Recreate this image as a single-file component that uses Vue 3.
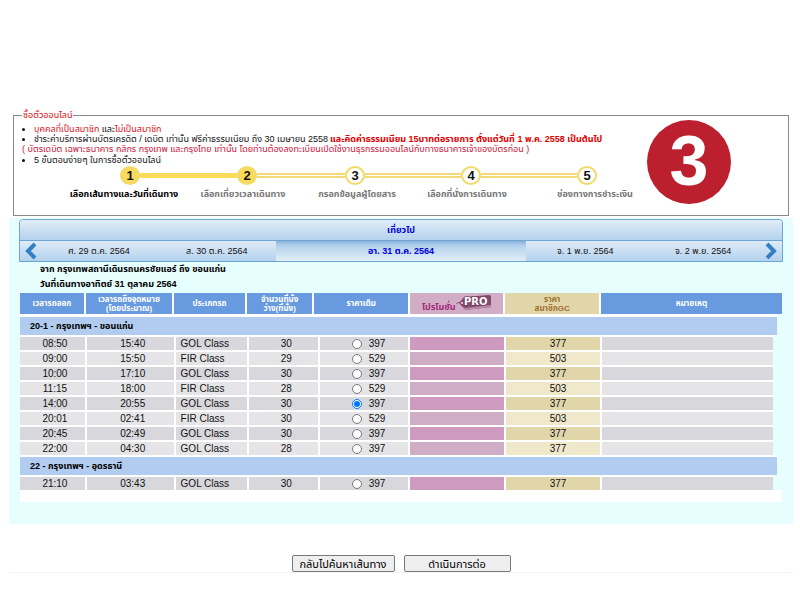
<script setup>
import { ref } from 'vue'

const steps = [
  { label: 'เลือกเส้นทางและวันที่เดินทาง', state: 'current' },
  { label: 'เลือกเที่ยวเวลาเดินทาง', state: 'next' },
  { label: 'กรอกข้อมูลผู้โดยสาร', state: '' },
  { label: 'เลือกที่นั่งการเดินทาง', state: '' },
  { label: 'ช่องทางการชำระเงิน', state: '' },
]

const days = ['ศ. 29 ต.ค. 2564', 'ส. 30 ต.ค. 2564', 'อา. 31 ต.ค. 2564', 'จ. 1 พ.ย. 2564', 'จ. 2 พ.ย. 2564']
const activeDay = ref(2)

const groups = [
  {
    name: '20-1 - กรุงเทพฯ - ขอนแก่น',
    trips: [
      ['08:50', '15:40', 'GOL Class', 30, 397, 377],
      ['09:00', '15:50', 'FIR Class', 29, 529, 503],
      ['10:00', '17:10', 'GOL Class', 30, 397, 377],
      ['11:15', '18:00', 'FIR Class', 28, 529, 503],
      ['14:00', '20:55', 'GOL Class', 30, 397, 377],
      ['20:01', '02:41', 'FIR Class', 30, 529, 503],
      ['20:45', '02:49', 'GOL Class', 30, 397, 377],
      ['22:00', '04:30', 'GOL Class', 28, 397, 377],
    ],
  },
  {
    name: '22 - กรุงเทพฯ - อุดรธานี',
    trips: [['21:10', '03:43', 'GOL Class', 30, 397, 377]],
  },
]
const selected = ref('14:00')
</script>

<template>
  <main class="page">
    <fieldset class="intro">
      <legend>ซื้อตั๋วออนไลน์</legend>
      <ul class="notes">
        <li><span class="red">บุคคลที่เป็นสมาชิก</span> และ<span class="red">ไม่เป็นสมาชิก</span></li>
        <li><span>ชำระค่าบริการผ่านบัตรเครดิต / เดบิต เท่านั้น ฟรีค่าธรรมเนียม ถึง 30 เมษายน 2558</span><b>และคิดค่าธรรมเนียม 15บาทต่อรายการ ตั้งแต่วันที่ 1 พ.ค. 2558 เป็นต้นไป</b></li>
      </ul>
      <p class="remark">( บัตรเดบิต เฉพาะธนาคาร กสิกร กรุงเทพ และกรุงไทย เท่านั้น โดยท่านต้องลงทะเบียนเปิดใช้งานธุรกรรมออนไลน์กับทางธนาคารเจ้าของบัตรก่อน )</p>
      <ul class="notes">
        <li>5 ขั้นตอนง่ายๆ ในการซื้อตั๋วออนไลน์</li>
      </ul>
      <div class="steps">
        <span v-for="(s, i) in steps" :key="i" class="track" :class="s.state"><span class="num">{{ i + 1 }}</span></span>
      </div>
      <div class="steps labels">
        <span v-for="s in steps" :key="s.label" :class="s.state">{{ s.label }}</span>
      </div>
      <span class="badge">3</span>
    </fieldset>

    <section class="results">
      <div class="picker">
        <h2>เที่ยวไป</h2>
        <nav class="days">
          <button class="arrow" aria-label="ก่อนหน้า">
            <svg viewBox="0 0 14 18" width="14" height="18"><path d="M12 2 5 9 12 16" /></svg>
          </button>
          <button v-for="(d, i) in days" :key="d" class="day" :class="{ active: i === activeDay }" @click="activeDay = i">{{ d }}</button>
          <button class="arrow" aria-label="ถัดไป">
            <svg viewBox="0 0 14 18" width="14" height="18"><path d="M2 2 9 9 2 16" /></svg>
          </button>
        </nav>
      </div>

      <div class="route">
        <p>จาก กรุงเทพสถานีเดินรถนครชัยแอร์ ถึง ขอนแก่น</p>
        <p>วันที่เดินทางอาทิตย์ 31 ตุลาคม 2564</p>
      </div>

      <table class="trips">
        <thead>
          <tr>
            <th>เวลารถออก</th>
            <th>เวลารถถึงจุดหมาย<br />(โดยประมาณ)</th>
            <th>ประเภทรถ</th>
            <th>จำนวนที่นั่ง<br />ว่าง(ที่นั่ง)</th>
            <th>ราคาเต็ม</th>
            <th class="promo">
              <span>โปรโมชั่น</span>
              <svg viewBox="0 0 36 17" width="36" height="17">
                <path class="string" d="M0 9Q3 6 5 8" />
                <path class="tag" d="M3 8 8 2 33 0Q35 0 35 2V12L9 15Z" />
                <path class="shade" d="M6 11 9 13 35 10V12L9 15Z" />
                <circle class="hole" cx="6" cy="8" r="1" />
                <text x="8" y="10">PRO</text>
              </svg>
            </th>
            <th class="member">ราคา<br />สมาชิกGC</th>
            <th>หมายเหตุ</th>
          </tr>
        </thead>
        <tbody v-for="g in groups" :key="g.name">
          <tr class="group"><th colspan="8">{{ g.name }}</th></tr>
          <tr v-for="t in g.trips" :key="t[0]" class="trip">
            <td>{{ t[0] }}</td>
            <td>{{ t[1] }}</td>
            <td class="type">{{ t[2] }}</td>
            <td>{{ t[3] }}</td>
            <td>
              <label><input v-model="selected" type="radio" name="trip" :value="t[0]" />{{ t[4] }}</label>
            </td>
            <td class="promo"></td>
            <td class="member">{{ t[5] }}</td>
            <td></td>
          </tr>
        </tbody>
      </table>
    </section>

    <footer class="actions">
      <button>กลับไปค้นหาเส้นทาง</button>
      <button class="proceed">ดำเนินการต่อ</button>
    </footer>
  </main>
</template>

<style>
body {
  margin: 0;
  background: #fff;
}
</style>

<style scoped>
.page {
  padding: 109px 7px 0 9px;
  font: 9px/10px "Liberation Sans", "Noto Sans Thai", sans-serif;
  color: #111;
}
p,
h2,
ul {
  margin: 0;
  padding: 0;
}
button {
  font: inherit;
  color: inherit;
  cursor: pointer;
}
.intro {
  position: relative;
  box-sizing: border-box;
  height: 107px;
  margin: 0 4px;
  padding: 3px 8px 0;
  border: 1px solid #888;
}
legend {
  padding: 0 1px;
  line-height: 12px;
  color: #d8141c;
}
.notes li {
  display: flex;
  align-items: center;
  height: 10px;
  list-style: none;
  white-space: pre;
}
.notes li::before {
  content: "";
  width: 3px;
  height: 3px;
  margin-right: 9px;
  border-radius: 50%;
  background: #111;
}
.red {
  color: #d8141c;
}
.notes b {
  margin-left: 2px;
  color: #e00000;
}
.remark {
  margin-bottom: 1px;
  color: #c8143c;
  white-space: nowrap;
}
.steps {
  display: grid;
  grid-template-columns: 120px 114px 102px 130px 102px;
  margin: 1px 0 0 48px;
  font-weight: bold;
  text-align: center;
}
.labels {
  grid-template-columns: 120px 118px 110px 110px 146px;
  margin: 4px 0 0 42px;
  color: #777;
  white-space: nowrap;
}
.labels .current {
  color: #000;
}
.track {
  display: grid;
  grid-template-columns: 1fr 20px 1fr;
  align-items: center;
}
.track::before,
.track::after {
  content: "";
  height: 1px;
  border: solid #f2da78;
  border-width: 2px 0;
}
.track:first-child::before,
.track:last-child::after {
  visibility: hidden;
}
.track.current::after,
.track.next::before {
  background: #f9dc5c;
  border-color: #f9dc5c;
}
.num {
  grid-column: 2;
  box-sizing: border-box;
  height: 19px;
  border: 2px solid #f2da68;
  border-radius: 50%;
  font-size: 13px;
  line-height: 15px;
  color: #111;
  background: #fff;
}
.current .num,
.next .num {
  background: #f9dc5c;
}
.badge {
  position: absolute;
  top: -1px;
  right: 57px;
  width: 84px;
  height: 84px;
  border-radius: 50%;
  background: #bc1f2d;
  color: #fff;
  font-size: 70px;
  font-weight: bold;
  line-height: 82px;
  text-align: center;
}
.results {
  margin-top: 2px;
  padding: 1px 10px 22px;
  background: #e6fefe;
}
.picker {
  border: 1px solid #6fa5d3;
  border-radius: 4px 4px 0 0;
  overflow: hidden;
  background: #c4dcf1;
}
h2 {
  font-size: 9px;
  line-height: 20px;
  text-align: center;
  color: #0000e0;
  background: linear-gradient(#e2edf8, #b4d2ee);
  border-bottom: 1px solid #6fa5d3;
}
.days {
  display: grid;
  grid-template-columns: 20fr 118fr 118fr 251fr 118fr 118fr 20fr;
  height: 20px;
  background: linear-gradient(#dfebf7, #b4d2ee);
}
.days button {
  padding: 0;
  border: 0;
  background: none;
  line-height: 20px;
  white-space: nowrap;
}
.arrow svg {
  display: block;
  margin: auto;
  fill: none;
  stroke: #3580c4;
  stroke-width: 4;
}
.days .active {
  font-weight: bold;
  color: #0000e0;
  background: linear-gradient(#88b4dc, #b4d2ec 25%, #e2eef8);
}
.route {
  padding: 0 21px;
  font-weight: bold;
  line-height: 15px;
  color: #000;
}
.trips {
  display: block;
  padding: 1px 1px 0;
}
.trips::after {
  content: "";
  display: block;
  height: 12px;
  background: #fff;
}
thead,
tbody {
  display: block;
}
tr {
  display: grid;
  column-gap: 2px;
  background: #fff;
}
thead tr {
  grid-template-columns: 64fr 87fr 71fr 66fr 94fr 94fr 94fr 182fr;
}
thead th {
  display: flex;
  align-items: center;
  justify-content: center;
  height: 21px;
  padding: 0;
  background: #689ae0;
  color: #fff;
  font-size: 8px;
  line-height: 9px;
  text-align: center;
}
thead .promo {
  background: #d2aec6;
  color: #a02878;
  font-size: 9px;
}
.promo span {
  align-self: flex-end;
  padding-bottom: 2px;
}
.string {
  fill: none;
  stroke: #8f5578;
}
.tag {
  fill: #84496c;
}
.shade {
  fill: #b98aa6;
}
.hole {
  fill: #f0dce8;
}
.promo text {
  font: bold 10px "DejaVu Sans", sans-serif;
  fill: #fff;
  stroke: #6e3a5a;
  stroke-width: 1;
  paint-order: stroke;
}
thead .member {
  background: #e0d6aa;
  color: #a07030;
}
.group {
  margin-right: 5px;
  padding-top: 3px;
}
tbody + tbody .group {
  padding-top: 2px;
}
.group th {
  padding: 0 10px;
  line-height: 18px;
  text-align: left;
  background: #b2ccef;
  color: #000;
}
.trip {
  grid-template-columns: 65fr 87fr 72fr 69fr 88fr 94fr 95fr 171fr;
  height: 13px;
  margin-right: 9px;
  padding-top: 2px;
}
.trip td {
  padding: 0 0 0 5px;
  font-size: 10px;
  line-height: 13px;
  text-align: center;
  background: #d8d7dc;
}
.trip:nth-child(odd) td {
  background: #e5e5e7;
}
.trip .type {
  text-align: left;
}
.trip .promo {
  background: #cf9abf;
}
.trip:nth-child(odd) .promo {
  background: #cfaec5;
}
.trip .member {
  padding-left: 10px;
  background: #e0d6aa;
}
.trip:nth-child(odd) .member {
  background: #efe8ca;
}
label {
  display: flex;
  align-items: center;
  justify-content: center;
  gap: 7px;
  padding-left: 4px;
}
input {
  width: 10px;
  height: 10px;
  margin: 0;
}
.actions {
  display: flex;
  justify-content: center;
  gap: 9px;
  padding-top: 31px;
  border-bottom: 1px solid #eef6fa;
}
.actions button {
  min-width: 103px;
  height: 17px;
  padding: 0;
  border: 1px solid #76797c;
  border-radius: 2px;
  background: #efefef;
  font-size: 11px;
  line-height: 14px;
  color: #000;
}
.actions .proceed {
  min-width: 107px;
}
</style>
